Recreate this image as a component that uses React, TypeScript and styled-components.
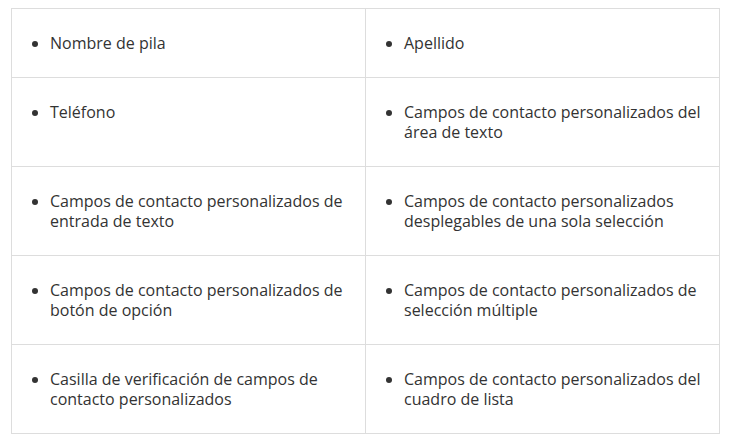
import React from "react";
import styled, { createGlobalStyle } from "styled-components";

const Global = createGlobalStyle`
  html, body { margin: 0; padding: 0; background: #fff; }
  body { font-family: "Open Sans", "Liberation Sans", sans-serif; }
`;

const Page = styled.div`
  padding: 8px 0 0 11px;
`;

const Table = styled.table`
  width: 709px;
  border-collapse: collapse;
  table-layout: fixed;
  font-family: "Open Sans", "Liberation Sans", sans-serif;
  font-size: 16px;
  line-height: 20px;
  color: #333;
`;

const Cell = styled.td`
  border: 1px solid #ddd;
  padding: 0 8px;
  vertical-align: top;
`;

const List = styled.ul`
  margin: 24px 0;
  padding-left: 30px;
  list-style: disc;
`;

const rows: [string, string][] = [
  ["Nombre de pila", "Apellido"],
  ["Teléfono", "Campos de contacto personalizados del área de texto"],
  [
    "Campos de contacto personalizados de entrada de texto",
    "Campos de contacto personalizados desplegables de una sola selección",
  ],
  [
    "Campos de contacto personalizados de botón de opción",
    "Campos de contacto personalizados de selección múltiple",
  ],
  [
    "Casilla de verificación de campos de contacto personalizados",
    "Campos de contacto personalizados del cuadro de lista",
  ],
];

export default function App() {
  return (
    <Page>
      <Global />
      <Table>
        <tbody>
          {rows.map((r, i) => (
            <tr key={i}>
              {r.map((t, j) => (
                <Cell key={j}>
                  <List>
                    <li>{t}</li>
                  </List>
                </Cell>
              ))}
            </tr>
          ))}
        </tbody>
      </Table>
    </Page>
  );
}
